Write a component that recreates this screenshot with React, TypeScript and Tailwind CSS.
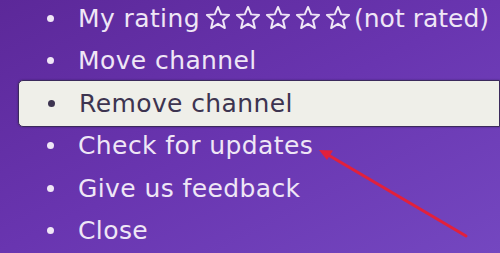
const items = ['Move channel', 'Remove channel', 'Check for updates', 'Give us feedback', 'Close']

function Star() {
  return (
    <svg width="28" height="28" viewBox="0 0 24 24" className="mx-[1px]">
      <path
        d="M12 2.5l2.7 6.4 6.8.5-5.2 4.5 1.6 6.7L12 17l-5.9 3.6 1.6-6.7-5.2-4.5 6.8-.5z"
        fill="none"
        stroke="#efe6f6"
        strokeWidth="1.7"
        strokeLinejoin="round"
      />
    </svg>
  )
}

function Bullet({ dark }: { dark?: boolean }) {
  return <span className={`h-[7px] w-[7px] shrink-0 rounded-full ${dark ? 'bg-[#3d3450]' : 'bg-[#efe6f6]'}`} />
}

export default function App() {
  return (
    <div
      className="relative h-[253px] w-[500px] overflow-hidden bg-gradient-to-br from-[#5c2899] via-[#6935b0] to-[#7447c0] text-[25px] tracking-[0.4px] text-[#efe6f6]"
      style={{ fontFamily: '"DejaVu Sans", "Noto Sans", sans-serif' }}
    >
      <div className="mt-[-3px] flex flex-col">
        <div className="flex h-[42.5px] items-center pl-[47px]">
          <Bullet />
          <span className="ml-[24px]">My rating</span>
          <span className="ml-[3px] flex items-center">
            <Star />
            <Star />
            <Star />
            <Star />
            <Star />
          </span>
          <span className="ml-[1px] whitespace-nowrap tracking-[0px]">(not rated)</span>
        </div>
        {items.map(item =>
          item === 'Remove channel' ? (
            <div
              key={item}
              className="my-[-2px] ml-[18px] flex h-[46.5px] items-center rounded-l-[5px] border border-[#3b2a5c] bg-[#efefe9] pl-[29px] text-[#3d3450] shadow-[0_0_2px_rgba(40,20,70,0.6)]"
            >
              <Bullet dark />
              <span className="ml-[24px]">{item}</span>
            </div>
          ) : (
            <div key={item} className="flex h-[42.5px] items-center pl-[47px]">
              <Bullet />
              <span className="ml-[24px]">{item}</span>
            </div>
          )
        )}
      </div>
      <svg className="absolute left-0 top-0" width="500" height="253" viewBox="0 0 500 253">
        <line x1="466" y1="236" x2="330" y2="156" stroke="#e2203c" strokeWidth="3" strokeLinecap="round" />
        <path d="M319 150 L333 150.5 L327 160 Z" fill="#e2203c" />
      </svg>
    </div>
  )
}
